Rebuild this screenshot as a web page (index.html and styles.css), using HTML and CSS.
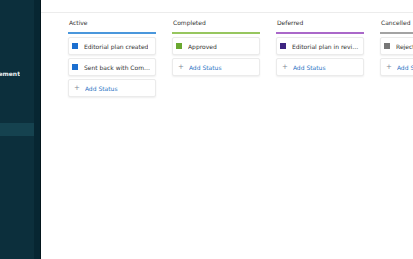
FILE: index.html
```html
<!DOCTYPE html>
<html lang="en">
<head>
    <meta charset="UTF-8">
    <meta name="viewport" content="width=device-width, initial-scale=1.0">
    <title>Status Workflow</title>
    <link rel="stylesheet" href="styles.css">
</head>
<body>
    <div class="app">
        <aside class="sidebar">
            <div class="side-inner">
                <div class="side-title"><span>Status Management</span></div>
                <div class="side-item active"></div>
            </div>
        </aside>
        <main class="main">
            <header class="page-header">
                <h1 class="page-title">Status Workflow</h1>
            </header>
            <div class="board">
                <div class="column">
                    <div class="col-head col-blue">Active</div>
                    <div class="card"><span class="dot dot-blue"></span><span class="card-text">Editorial plan created</span></div>
                    <div class="card"><span class="dot dot-blue"></span><span class="card-text">Sent back with Comments</span></div>
                    <div class="card add"><span class="plus">+</span><span class="card-text">Add Status</span></div>
                </div>
                <div class="column">
                    <div class="col-head col-green">Completed</div>
                    <div class="card"><span class="dot dot-green"></span><span class="card-text">Approved</span></div>
                    <div class="card add"><span class="plus">+</span><span class="card-text">Add Status</span></div>
                </div>
                <div class="column">
                    <div class="col-head col-purple">Deferred</div>
                    <div class="card"><span class="dot dot-purple"></span><span class="card-text">Editorial plan in review</span></div>
                    <div class="card add"><span class="plus">+</span><span class="card-text">Add Status</span></div>
                </div>
                <div class="column">
                    <div class="col-head col-grey">Cancelled</div>
                    <div class="card"><span class="dot dot-grey"></span><span class="card-text">Rejected</span></div>
                    <div class="card add"><span class="plus">+</span><span class="card-text">Add Status</span></div>
                </div>
            </div>
        </main>
    </div>
</body>
</html>
```

FILE: styles.css
```css
/* ---------- base ---------- */

* {
    box-sizing: border-box;
}

body {
    margin: 0;
    font-family: "DejaVu Sans", Verdana, sans-serif;
    font-size: 6px;
    color: #333;
    background: #fff;
}

.app {
    display: flex;
    height: 259px;
    overflow: hidden;
}

/* ---------- sidebar ---------- */

.sidebar {
    width: 41px;
    flex-shrink: 0;
    background: #072632;
    border-right: 1px solid #04161d;
    padding-right: 6px;
}

.side-inner {
    height: 100%;
    background: #0c2f3c;
    padding-top: 70px;
}

.side-title {
    display: flex;
    justify-content: flex-end;
    width: 20px;
    overflow: hidden;
    white-space: nowrap;
    color: #e8f1f3;
    font-weight: bold;
    line-height: 8px;
}

.side-item {
    height: 13px;
    margin-top: 45px;
}

.side-item.active {
    background: #15424f;
}

/* ---------- main ---------- */

.main {
    flex: 1;
    min-width: 0;
}

.page-header {
    height: 13px;
    border-bottom: 1px solid #ececec;
    overflow: hidden;
    padding-left: 20px;
}

.page-title {
    margin: -9px 0 0;
    font-size: 10px;
    font-weight: normal;
    color: #d6d6d6;
    line-height: 12px;
}

.board {
    display: flex;
    gap: 16px;
    padding: 5px 0 0 27px;
}

.column {
    width: 88px;
    flex-shrink: 0;
    display: flex;
    flex-direction: column;
    gap: 3px;
}

.col-head {
    padding: 1px 1px 0;
    height: 16px;
    line-height: 8px;
    border-bottom: 2px solid #999;
}

.col-blue { border-color: #4a97dc; }
.col-green { border-color: #97c65f; }
.col-purple { border-color: #aa68c9; }
.col-grey { border-color: #a3a3a3; }

.card {
    display: flex;
    align-items: center;
    height: 18px;
    padding: 0 3px;
    background: #fff;
    border: 1px solid #ebebeb;
    border-radius: 2px;
    box-shadow: 0 1px 2px rgba(0, 0, 0, 0.07);
    white-space: nowrap;
}

.card-text {
    overflow: hidden;
    text-overflow: ellipsis;
}

.dot {
    width: 6px;
    height: 6px;
    flex-shrink: 0;
    margin-right: 6px;
}

.dot-blue { background: #1b6fd0; }
.dot-green { background: #6aa830; }
.dot-purple { background: #3e2580; }
.dot-grey { background: #777; }

.add {
    color: #2a74c4;
    padding-left: 5px;
}

.plus {
    color: #7d8894;
    margin-right: 5px;
    font-size: 7px;
}
```
